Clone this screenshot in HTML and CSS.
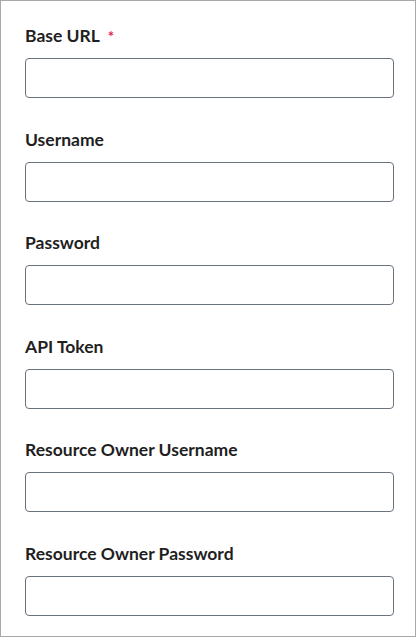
FILE: index.html
```html
<!DOCTYPE html>
<html>
<head>
<meta charset="utf-8">
<link rel="stylesheet" href="styles.css">
</head>
<body>
<div class="frame">
  <form class="form">
    <div class="field">
      <label class="label">Base URL <span class="req">*</span></label>
      <input class="input" type="text">
    </div>
    <div class="field">
      <label class="label">Username</label>
      <input class="input" type="text">
    </div>
    <div class="field">
      <label class="label">Password</label>
      <input class="input" type="password">
    </div>
    <div class="field">
      <label class="label">API Token</label>
      <input class="input" type="text">
    </div>
    <div class="field">
      <label class="label">Resource Owner Username</label>
      <input class="input" type="text">
    </div>
    <div class="field">
      <label class="label">Resource Owner Password</label>
      <input class="input" type="password">
    </div>
  </form>
</div>
</body>
</html>
```
FILE: styles.css
```css
html, body {
  margin: 0;
  padding: 0;
  background: #fff;
}
.frame {
  box-sizing: border-box;
  width: 416px;
  height: 637px;
  border: 1px solid #a8a8a8;
  padding: 23px 21px 0 24px;
  overflow: hidden;
}
.form {
  display: flex;
  flex-direction: column;
  gap: 29.5px;
}
.field {
  display: flex;
  flex-direction: column;
  gap: 10px;
}
.label {
  font-family: Lato, "Open Sans", sans-serif;
  font-weight: 700;
  font-size: 17.5px;
  line-height: 24px;
  color: #1f1f1f;
  height: 24px;
}
.req {
  color: #e0245e;
  margin-left: 4px;
  font-size: 15px;
}
.input {
  box-sizing: border-box;
  width: 100%;
  height: 40px;
  margin: 0;
  border: 1px solid #6a7380;
  border-radius: 4px;
  background: #fff;
  font-size: 16px;
}
```
